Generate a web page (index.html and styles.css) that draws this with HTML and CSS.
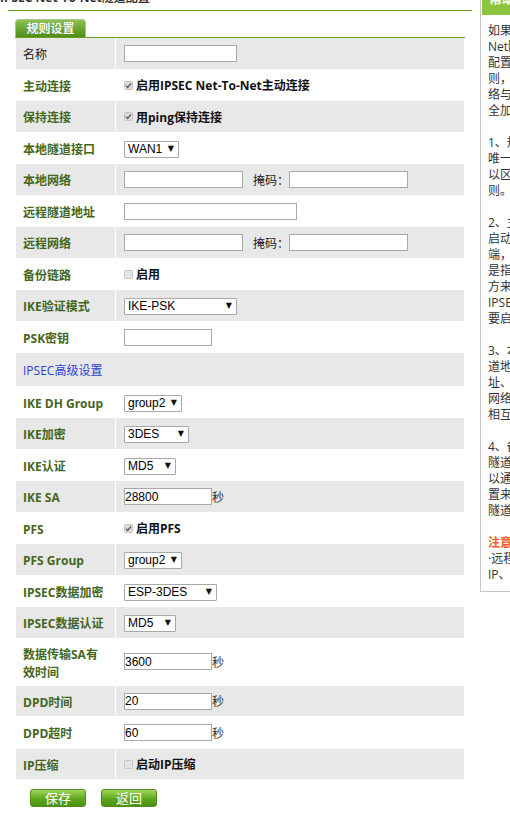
FILE: index.html
```html
<!DOCTYPE html>
<html lang="zh-CN">
<head>
<meta charset="utf-8">
<title>IPSEC Net-To-Net隧道配置</title>
<link rel="stylesheet" href="styles.css">
</head>
<body>
<div class="page">
  <div class="main">
    <h1 class="title">IPSEC Net-To-Net隧道配置</h1>
    <div class="title-rule"></div>
    <div class="tabbar"><span class="tab">规则设置</span></div>
    <table class="form">
      <tr class="g"><td class="lbl plain">名称</td><td><input class="txt w113" type="text"></td></tr>
      <tr><td class="lbl">主动连接</td><td><span class="chk"><svg width="9" height="9" viewBox="0 0 9 9"><rect x=".5" y=".5" width="8" height="8" rx="1" fill="#dcdcdc" stroke="#c2c2c2"/><path d="M2 4.6 L3.7 6.4 L7 2.4" stroke="#555" stroke-width="1.3" fill="none"/></svg>启用IPSEC Net-To-Net主动连接</span></td></tr>
      <tr class="g"><td class="lbl">保持连接</td><td><span class="chk"><svg width="9" height="9" viewBox="0 0 9 9"><rect x=".5" y=".5" width="8" height="8" rx="1" fill="#dcdcdc" stroke="#c2c2c2"/><path d="M2 4.6 L3.7 6.4 L7 2.4" stroke="#555" stroke-width="1.3" fill="none"/></svg>用ping保持连接</span></td></tr>
      <tr><td class="lbl">本地隧道接口</td><td><span class="sel w55"><select><option>WAN1</option></select></span></td></tr>
      <tr class="g"><td class="lbl">本地网络</td><td><input class="txt w119" type="text"><span class="mask">掩码：</span><input class="txt w119" type="text"></td></tr>
      <tr><td class="lbl">远程隧道地址</td><td><input class="txt w173" type="text"></td></tr>
      <tr class="g"><td class="lbl">远程网络</td><td><input class="txt w119" type="text"><span class="mask">掩码：</span><input class="txt w119" type="text"></td></tr>
      <tr><td class="lbl">备份链路</td><td><span class="chk"><svg width="9" height="9" viewBox="0 0 9 9"><rect x=".5" y=".5" width="8" height="8" rx="1" fill="#e4e4e4" stroke="#c6c6c6"/></svg>启用</span></td></tr>
      <tr class="g"><td class="lbl">IKE验证模式</td><td><span class="sel w113"><select><option>IKE-PSK</option></select></span></td></tr>
      <tr><td class="lbl">PSK密钥</td><td><input class="txt w88" type="text"></td></tr>
      <tr class="g"><td class="section" colspan="2">IPSEC高级设置</td></tr>
      <tr><td class="lbl">IKE DH Group</td><td><span class="sel w58"><select><option>group2</option></select></span></td></tr>
      <tr class="g"><td class="lbl">IKE加密</td><td><span class="sel w65"><select><option>3DES</option></select></span></td></tr>
      <tr><td class="lbl">IKE认证</td><td><span class="sel w52"><select><option>MD5</option></select></span></td></tr>
      <tr class="g"><td class="lbl">IKE SA</td><td><input class="txt w88 num" type="text" value="28800"><span class="unit">秒</span></td></tr>
      <tr><td class="lbl">PFS</td><td><span class="chk"><svg width="9" height="9" viewBox="0 0 9 9"><rect x=".5" y=".5" width="8" height="8" rx="1" fill="#dcdcdc" stroke="#c2c2c2"/><path d="M2 4.6 L3.7 6.4 L7 2.4" stroke="#555" stroke-width="1.3" fill="none"/></svg>启用PFS</span></td></tr>
      <tr class="g"><td class="lbl">PFS Group</td><td><span class="sel w58"><select><option>group2</option></select></span></td></tr>
      <tr><td class="lbl">IPSEC数据加密</td><td><span class="sel w93"><select><option>ESP-3DES</option></select></span></td></tr>
      <tr class="g"><td class="lbl">IPSEC数据认证</td><td><span class="sel w52"><select><option>MD5</option></select></span></td></tr>
      <tr class="tall"><td class="lbl">数据传输SA有效时间</td><td><input class="txt w88 num" type="text" value="3600"><span class="unit">秒</span></td></tr>
      <tr class="g"><td class="lbl">DPD时间</td><td><input class="txt w88 num" type="text" value="20"><span class="unit">秒</span></td></tr>
      <tr><td class="lbl">DPD超时</td><td><input class="txt w88 num" type="text" value="60"><span class="unit">秒</span></td></tr>
      <tr class="g"><td class="lbl">IP压缩</td><td><span class="chk"><svg width="9" height="9" viewBox="0 0 9 9"><rect x=".5" y=".5" width="8" height="8" rx="1" fill="#e4e4e4" stroke="#c6c6c6"/></svg>启动IP压缩</span></td></tr>
    </table>
    <div class="actions">
      <button class="btn" type="button">保存</button>
      <button class="btn" type="button">返回</button>
    </div>
  </div>
  <div class="help">
    <div class="help-head">帮助</div>
    <div class="help-body">
      <p>如果要建立IPSEC Net-To-<br>Net隧道，需要在两端路由器上<br>配置相对应的IPSEC隧道规<br>则，使两端路由器的本地网<br>络与远程网络之间进行安<br>全加密的通信。</p>
      <p>1、规则名称：用于标识该规则，<br>唯一不可重复，便于用户<br>以区分不同的隧道规<br>则。</p>
      <p>2、主动连接：勾选后路由器将主动<br>启动连接，去连接远程<br>端，被动模式<br>是指等待对<br>方来连接<br>IPSEC，两端至少有一端<br>要启用主动连接。</p>
      <p>3、本地隧道接口和远程隧<br>道地址：两端需配置对方的公网地<br>址、本地网络和远程<br>网络需要与对端设置<br>相互对应。</p>
      <p>4、备份链路：启用后，当主<br>隧道断开时，可<br>以通过备份链路<br>置来保持<br>隧道连接。</p>
      <p><span class="note">注意：</span><br>·远程隧道地址可以填写对端的公网<br>IP、域名。</p>
    </div>
  </div>
</div>
</body>
</html>
```

FILE: styles.css
```css
html, body {
  margin: 0;
  padding: 0;
  overflow: hidden;
  background: #fff;
}

body {
  font-family: "Open Sans", "Noto Sans CJK SC", sans-serif;
  font-size: 12px;
  color: #222;
}

.page {
  display: flex;
  align-items: flex-start;
  margin-top: -12px;
}

.main {
  width: 472px;
  flex: none;
}

.title {
  margin: 0;
  height: 20px;
  font-size: 12px;
  line-height: 20px;
  font-weight: bold;
  color: #333;
  white-space: nowrap;
}

.title-rule {
  margin: 2px 0 0 8px;
  height: 1px;
  background: #6aa121;
}

.tabbar {
  margin: 8px 0 0 15px;
  width: 450px;
  height: 18px;
  border-bottom: 1px solid #6aa121;
  display: flex;
}

.tab {
  box-sizing: border-box;
  width: 71px;
  height: 18px;
  border: 1px solid #a9c98c;
  border-bottom: none;
  border-radius: 4px 4px 0 0;
  background: linear-gradient(#8cc24f, #4f8d17);
  color: #fff;
  font-weight: bold;
  font-size: 12px;
  line-height: 17px;
  text-align: center;
  text-shadow: 0 0 1px #3e6e10;
}

.form {
  margin: -1px 0 0 15px;
  width: 450px;
  border-spacing: 1px;
  table-layout: fixed;
}

.form td {
  height: 30.5px;
  padding: 0 8px;
  background: #fff;
  vertical-align: middle;
  white-space: nowrap;
}

.form tr.g td {
  background: #e8e8e8;
}

.form tr.tall td {
  height: 46px;
}

.form td.lbl {
  box-sizing: border-box;
  width: 99px;
  padding: 4px 6px 0 7px;
  font-weight: bold;
  color: #45661d;
  line-height: 18px;
  white-space: normal;
}

.form td.plain {
  font-weight: normal;
  color: #1a1a1a;
}

.form td.section {
  padding: 2px 0 0 7px;
  color: #2a3fd6;
}

.txt {
  box-sizing: border-box;
  height: 17px;
  margin: 0;
  padding: 0 1px;
  border: 1px solid #a9a9a9;
  background: #fff;
  font-family: "Liberation Sans", Arial, sans-serif;
  font-size: 12px;
  color: #000;
  vertical-align: middle;
}

.txt.num {
  padding: 0;
}

.w52 { width: 52px; }
.w55 { width: 55px; }
.w58 { width: 58px; }
.w65 { width: 65px; }
.w88 { width: 88px; }
.w93 { width: 93px; }
.w113 { width: 113px; }
.w119 { width: 119px; }
.w173 { width: 173px; }

.mask {
  margin-left: 10px;
  color: #222;
  vertical-align: middle;
}

.unit {
  color: #333;
  vertical-align: middle;
}

.sel {
  position: relative;
  display: inline-block;
  height: 17px;
  vertical-align: middle;
}

.sel select {
  box-sizing: border-box;
  appearance: none;
  -webkit-appearance: none;
  width: 100%;
  height: 17px;
  margin: 0;
  padding: 0 0 0 3px;
  border: 1px solid #a9a9a9;
  border-radius: 1px;
  background: #fff;
  font-family: "Liberation Sans", Arial, sans-serif;
  font-size: 12px;
  line-height: 15px;
  color: #000;
}

.sel::after {
  content: "▼";
  position: absolute;
  right: 5px;
  top: 0;
  font-family: "DejaVu Sans", sans-serif;
  font-size: 8px;
  line-height: 17px;
  color: #111;
  pointer-events: none;
}

.chk {
  display: inline-flex;
  align-items: center;
  gap: 3px;
  font-weight: bold;
  color: #111;
  vertical-align: middle;
}

.chk svg {
  flex: none;
}

.actions {
  display: flex;
  gap: 15px;
  padding: 9px 0 0 30px;
}

.btn {
  box-sizing: border-box;
  width: 56px;
  height: 18px;
  margin: 0;
  padding: 0;
  border: 1px solid #4f8c18;
  border-radius: 3px;
  background: linear-gradient(#a2d65f, #5fa81c 55%, #4a9212);
  color: #fff;
  font-family: "Noto Sans CJK SC", sans-serif;
  font-size: 13px;
  line-height: 16px;
}

.help {
  flex: none;
  width: 220px;
  margin-left: 8px;
  border-left: 1px solid #c8c8c8;
  border-bottom: 1px solid #c8c8c8;
}

.help-head {
  height: 27px;
  margin-left: 1px;
  padding-left: 7px;
  background: #8cc63f;
  color: #fff;
  font-weight: bold;
  font-size: 13px;
  line-height: 20px;
}

.help-body {
  padding: 8px 0 8px 7px;
  color: #333;
  font-size: 12px;
  line-height: 16px;
  white-space: nowrap;
}

.help-body p {
  margin: 0 0 16px;
}

.help-body p:last-child {
  margin-bottom: 0;
}

.note {
  color: #ff5a1a;
  font-weight: bold;
}
```
